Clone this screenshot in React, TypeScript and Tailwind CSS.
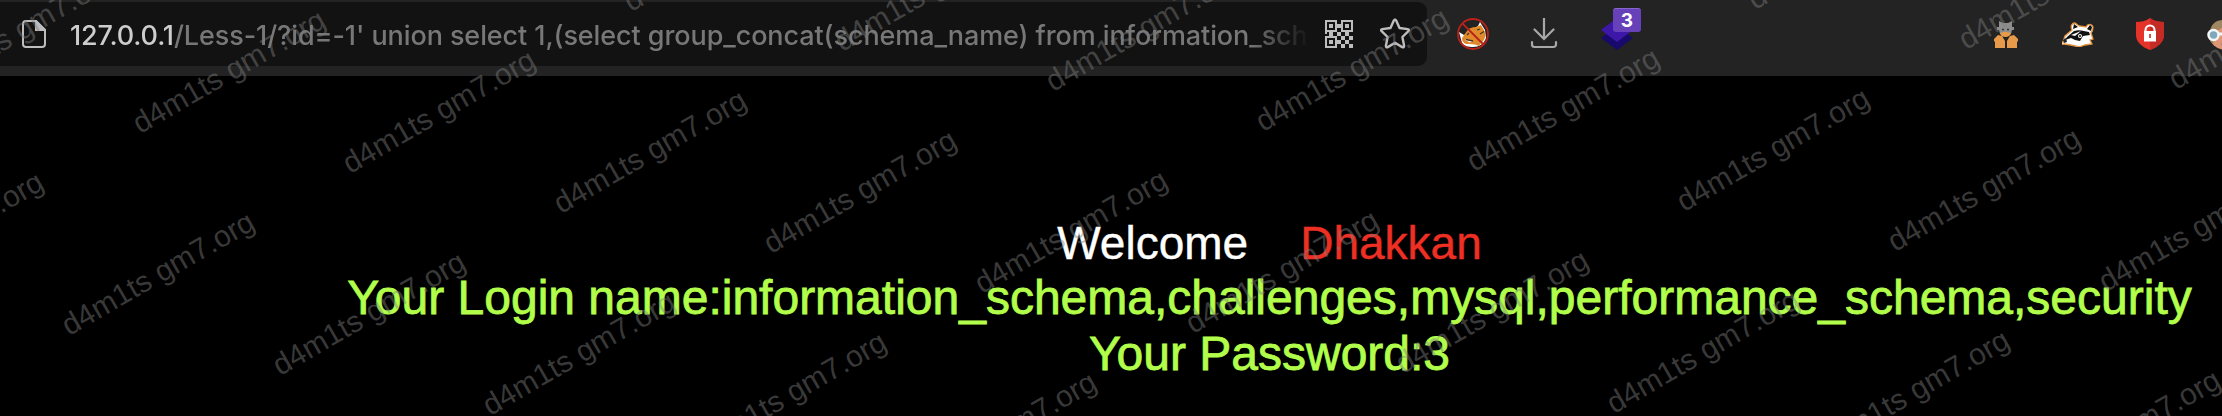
import React from "react";

const marks: { x: number; y: number }[] = [];
for (let n = -3; n <= 3; n++) {
  for (let m = -4; m <= 12; m++) {
    const x = 140.5 + m * 210.6 - n * 70.6;
    const y = 135.5 + m * 40 + n * 202;
    if (x > -200 && x < 2222 && y > -10 && y < 530) marks.push({ x, y });
  }
}

function QrIcon() {
  return (
    <svg className="h-7 w-7 shrink-0" viewBox="0 0 28 28" fill="#bdbdbd">
      <path fillRule="evenodd" d="M0 0h12v12H0zM2 2v8h8V2zM4 4h4v4H4zM16 0h12v12H16zM18 2v8h8V2zM20 4h4v4h-4zM0 16h12v12H0zM2 18v8h8v-8zM4 20h4v4H4z" />
      <path d="M12 4h4v4h-4zM4 12h4v4H4zM0 12h2v2H0zM12 12h4v4h-4zM20 12h4v4h-4zM16 16h4v4h-4zM24 16h4v4h-4zM12 20h4v4h-4zM20 20h4v4h-4zM16 24h4v4h-4zM24 24h4v4h-4z" />
    </svg>
  );
}

export default function App() {
  return (
    <div className="relative h-[416px] w-[2222px] overflow-hidden bg-black font-['Liberation_Sans',Arial,sans-serif]">
      <header className="flex h-[76px] items-start bg-[#232323] pt-[2px]">
        <div className="flex h-16 w-[1427px] shrink-0 items-center rounded-r-[9px] bg-[#121212] pl-[22px]">
          <svg className="h-7 w-6 shrink-0" viewBox="0 0 24 28" fill="none" stroke="#bdbdbd" strokeWidth="2">
            <path d="M14 1H4a3 3 0 0 0-3 3v20a3 3 0 0 0 3 3h16a3 3 0 0 0 3-3V10z" />
            <path d="M14 1v9h9z" fill="#bdbdbd" />
          </svg>
          <div className="ml-[24px] mt-[4px] w-[1240px] shrink-0 overflow-hidden whitespace-pre font-['Inter',sans-serif] text-[27px] font-medium leading-[40px] tracking-[-0.09px] text-[#777777] [mask-image:linear-gradient(to_right,black_1180px,transparent_1240px)]">
            <span className="tracking-[-0.15px] text-[#cdcdcd]">127.0.0.1</span>/Less-1/?id=-1' union select 1,(select group_concat(schema_name) from information_schema
          </div>
          <div className="ml-[15px] flex items-center gap-[26px]">
            <QrIcon />
            <svg className="h-8 w-8 shrink-0" viewBox="0 0 32 32" fill="none" stroke="#bdbdbd" strokeWidth="2.400" strokeLinejoin="round">
              <path d="M14.800 2.600q1.200-1.800 2.400 0l3.300 7.400 8.200 1.100q2 .5.700 2.100l-6 5.800 1.700 8.800q0 2.100-1.900 1.300L16 24.800l-7.200 4.300q-1.900.8-1.900-1.300l1.700-8.800-6-5.800q-1.300-1.600.7-2.100l8.200-1.100z" />
            </svg>
          </div>
        </div>
        <div className="ml-[30px] mt-4 flex items-start">
          <svg className="h-8 w-8 shrink-0" viewBox="0 0 32 32">
            <path d="M2 14l5 3 14-9 2-4 5 8 1 8c-2 6-7 9-13 9-5 0-9-1-11-4z" fill="#fff" />
            <path d="M5 20l5-7c2-3 5-4 9-4l5-2 4 7c1 5-1 9-4 11l-2 3c-5-2-8-2-13-2-3-1-4-3-4-6z" fill="#e08a2c" />
            <path d="M8 22c3-1 5 0 8 1l-3 1.500z" fill="#fff" />
            <path d="M9 21.500l7 1.500M23 16l4-2.500M10 17l2-2M20 12l3-1" stroke="#4b3119" strokeWidth="1.300" />
            <circle cx="16" cy="16" r="15" fill="none" stroke="#b9211b" strokeWidth="1.800" />
            <path d="M5.500 5.500l21 21" stroke="#b9211b" strokeWidth="1.800" />
          </svg>
          <svg className="ml-[41px] h-8 w-[28px] shrink-0" viewBox="0 0 28 32" fill="none" stroke="#a8a8a8" strokeWidth="2.200">
            <path d="M14 0v20.500M4.500 11.500L14 21l9.500-9.500M2 24v2.500a2.500 2.500 0 0 0 2.500 2.500h19a2.500 2.500 0 0 0 2.500-2.500V24" strokeLinecap="round" />
          </svg>
          <div className="relative ml-[43px] h-8 w-8 shrink-0">
            <svg className="h-8 w-8" viewBox="0 0 32 32">
              <path d="M0 20l16-12 16 12-16 12z" fill="#180a6b" />
              <path d="M0 12L16 0l16 12-16 12z" fill="#3d17a8" />
            </svg>
            <div className="absolute -top-[10px] left-[12px] flex h-6 w-7 items-center justify-center rounded-[3px] border-t border-[#8566cf] bg-[#6741b9] font-['Inter',sans-serif] text-[19px] font-bold leading-none text-white">3</div>
          </div>
          <svg className="ml-[361px] mt-[3px] h-7 w-6 shrink-0" viewBox="0 0 24 28">
            <path d="M5 0l4 2h5l4-2v6h2v3h-2l-1 4H6L5 9H3V6h2z" fill="#8d8d8d" />
            <path d="M8 8.500h2M13 8.500h2" stroke="#303030" strokeWidth="1.500" />
            <path d="M6 12q6-2 11 0-1 4-5.500 4T6 12zM0 18l4-4 4 1 3 5v7H1v-7l-1 1zM24 18l-4-4-4 1-3 5v7h10v-7l1 1z" fill="#e79b4a" />
          </svg>
          <svg className="ml-[44px] mt-1 h-[25px] w-8 shrink-0" viewBox="0 0 32 25">
            <path d="M1 20l2-6 7-6c-2-4 0-7 3-7l4 3 7 1c2-4 6-3 7 0 0 4-1 5-2 6l2 6-3 1 2 4-7 1-6 2-8-2-7-1c-2 1-3 0-2-2z" fill="#fff" stroke="#e79440" strokeWidth="1.300" />
            <path d="M5 15l7-6c5-2 10 0 15 1l1 3-7 1-3 5-5-1-4-2-6 2zM11 7l1-5 4 3zM25 7l3-4 2 2-1 4z" fill="#111" />
            <path d="M1 18l3-2 1 4-3 1zM22 17l4 2M14 21l5 1" fill="#222" />
            <path d="M9 13l10-4-6 5zM16 14a2 2 0 1 0 4 0 2 2 0 1 0-4 0z" fill="#fff" />
            <circle cx="18" cy="14" r="1" fill="#111" />
          </svg>
          <svg className="ml-[42px] h-8 w-7 shrink-0" viewBox="0 0 28 32">
            <path d="M14 0c4 3 9 4 14 4v13c0 7-6 12-14 15C6 29 0 24 0 17V4c5 0 10-1 14-4z" fill="#e5332a" />
            <path d="M14 0c4 3 9 4 14 4v13c0 7-6 12-14 15z" fill="#c42b25" />
            <path d="M9.500 14v-2a4.500 4.500 0 0 1 9 0v2" stroke="#fff" strokeWidth="2" fill="none" />
            <path d="M8 13h12v10.500H8z" fill="#fff" />
            <path d="M13.200 16h1.600v4h-1.600z" fill="#c42b25" />
          </svg>
          <svg className="ml-[43px] h-8 w-8 shrink-0" viewBox="0 0 32 32">
            <circle cx="17" cy="17" r="14.500" fill="#df9674" />
            <path d="M3 14C4 6 9 2 17 2v6L9 14l-3 12-3-3z" fill="#9e8762" />
            <circle cx="6.500" cy="17" r="5" fill="#7fa9bb" stroke="#f3f5f6" strokeWidth="2.500" />
            <path d="M11 16h9" stroke="#f3f5f6" strokeWidth="3" />
          </svg>
        </div>
      </header>
      <main className="ml-[169px] w-[2201px] pt-[140px] text-center text-[48px]">
        <div className="whitespace-pre text-[46px] leading-[54px] text-white [-webkit-text-stroke:0.4px_#ffffff]">Welcome<span className="ml-[52px] text-[#ed2f24] [-webkit-text-stroke:0.4px_#ed2f24]">Dhakkan</span></div>
        <div className="whitespace-nowrap leading-[56px] text-[#b1ff4a] [-webkit-text-stroke:0.8px_#b1ff4a]">
          <div>Your Login name:information_schema,challenges,mysql,performance_schema,security</div>
          <div>Your Password:3</div>
        </div>
      </main>
      <div className="pointer-events-none absolute inset-0 overflow-hidden">
        {marks.map((p, i) => (
          <span key={i} className="absolute origin-bottom-left -rotate-[30deg] whitespace-nowrap text-[30px] leading-[24px] text-[#808080]/45" style={{ left: p.x, top: p.y - 24 }}>d4m1ts gm7.org</span>
        ))}
      </div>
    </div>
  );
}
